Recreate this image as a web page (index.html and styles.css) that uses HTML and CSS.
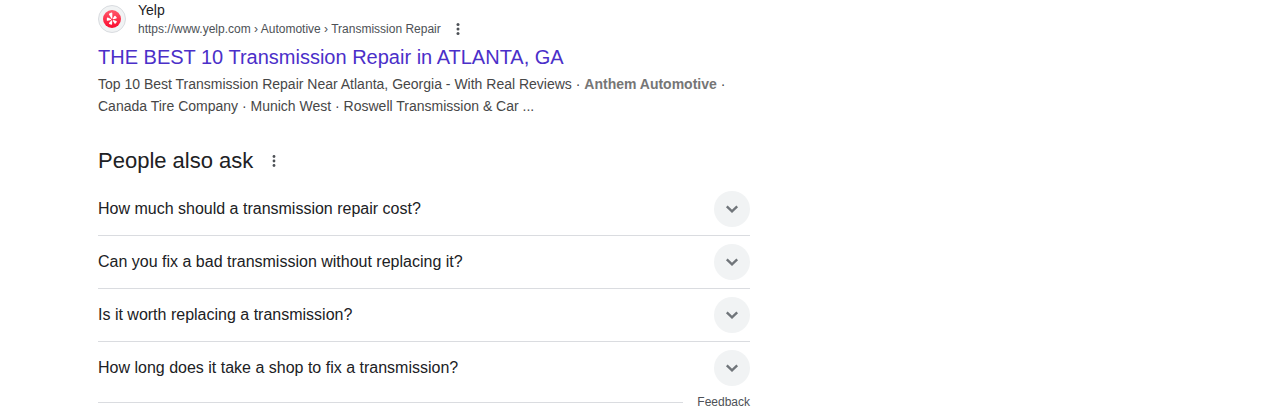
FILE: index.html
```html
<!DOCTYPE html>
<html lang="en">
<head>
<meta charset="utf-8">
<meta name="viewport" content="width=device-width, initial-scale=1.0">
<title>transmission repair - Search</title>
<link rel="stylesheet" href="styles.css">
</head>
<body>
<main class="results">

  <article class="result">
    <div class="source">
      <span class="favicon">
        <svg width="18" height="18" viewBox="0 0 18 18" aria-hidden="true">
          <defs>
            <linearGradient id="red" x1="0" y1="0" x2="0" y2="1">
              <stop offset="0" stop-color="#ff5a6c"/>
              <stop offset="1" stop-color="#fb0a2e"/>
            </linearGradient>
          </defs>
          <circle cx="9" cy="9" r="9" fill="url(#red)"/>
          <g fill="#fff">
            <path d="M9.300 8.300 V3.200 Q9.300 2.500 8.500 2.600 L6.300 3.400 Q5.600 3.800 6 4.500 L8.400 8.500 Q9.200 9.200 9.300 8.300 Z"/>
            <path d="M7.900 9 L4.900 7.500 Q4.100 7.300 3.900 8 L3.800 10.200 Q3.900 11 4.700 10.800 L7.900 10 Q8.600 9.500 7.900 9 Z"/>
            <path d="M8.300 10.500 L6 13 Q5.700 13.700 6.300 14 L8.300 14.700 Q9.100 14.800 9.100 14 L9.200 10.900 Q9 10.100 8.300 10.500 Z"/>
            <path d="M9.900 10.900 L11.500 13.500 Q12 14.100 12.600 13.500 L13.800 11.900 Q14 11.200 13.400 10.900 L10.500 10 Q9.600 10.100 9.900 10.900 Z"/>
            <path d="M10.400 9.300 L13.300 8.500 Q14 8.200 13.700 7.500 L12.500 5.900 Q11.900 5.400 11.400 6 L9.800 8.500 Q9.500 9.300 10.400 9.300 Z"/>
          </g>
        </svg>
      </span>
      <div class="site">
        <div class="site-name">Yelp</div>
        <div class="site-url">
          <cite>https://www.yelp.com › Automotive › Transmission Repair</cite>
          <button class="more" type="button" aria-label="About this result">
            <svg width="4" height="12" viewBox="0 0 4 12"><circle cx="2" cy="1.500" r="1.500"/><circle cx="2" cy="6" r="1.500"/><circle cx="2" cy="10.500" r="1.500"/></svg>
          </button>
        </div>
      </div>
    </div>
    <h3 class="title"><a href="#">THE BEST 10 Transmission Repair in ATLANTA, GA</a></h3>
    <p class="snippet">Top 10 Best Transmission Repair Near Atlanta, Georgia - With Real Reviews · <em>Anthem Automotive</em> · Canada Tire Company · Munich West · Roswell Transmission &amp; Car ...</p>
  </article>

  <section class="related">
    <div class="related-head">
      <h2>People also ask</h2>
      <button class="more" type="button" aria-label="About this section">
        <svg width="4" height="12" viewBox="0 0 4 12"><circle cx="2" cy="1.500" r="1.400"/><circle cx="2" cy="6" r="1.400"/><circle cx="2" cy="10.500" r="1.400"/></svg>
      </button>
    </div>

    <div class="questions">
      <button class="question" type="button">
        <span>How much should a transmission repair cost?</span>
        <span class="arrow"><svg width="24" height="24" viewBox="0 0 24 24"><path d="M6.800 9.300 L12 14.300 L17.200 9.300"/></svg></span>
      </button>
      <button class="question" type="button">
        <span>Can you fix a bad transmission without replacing it?</span>
        <span class="arrow"><svg width="24" height="24" viewBox="0 0 24 24"><path d="M6.800 9.300 L12 14.300 L17.200 9.300"/></svg></span>
      </button>
      <button class="question" type="button">
        <span>Is it worth replacing a transmission?</span>
        <span class="arrow"><svg width="24" height="24" viewBox="0 0 24 24"><path d="M6.800 9.300 L12 14.300 L17.200 9.300"/></svg></span>
      </button>
      <button class="question" type="button">
        <span>How long does it take a shop to fix a transmission?</span>
        <span class="arrow"><svg width="24" height="24" viewBox="0 0 24 24"><path d="M6.800 9.300 L12 14.300 L17.200 9.300"/></svg></span>
      </button>
    </div>

    <div class="related-foot">
      <a href="#">Feedback</a>
    </div>
  </section>

</main>
</body>
</html>
```

FILE: styles.css
```css
* {
  box-sizing: border-box;
}

body {
  margin: 0;
  background: #fff;
  color: #202124;
  font-family: Arial, "Liberation Sans", sans-serif;
  font-size: 14px;
}

h2, h3, p {
  margin: 0;
  font-weight: normal;
}

a {
  text-decoration: none;
}

button {
  padding: 0;
  border: none;
  background: none;
  color: inherit;
  font-family: inherit;
  cursor: pointer;
}

.results {
  max-width: 750px;
  padding-left: 98px;
}

/* search result */
.source {
  display: flex;
  align-items: center;
  gap: 12px;
}

.favicon {
  display: flex;
  align-items: center;
  justify-content: center;
  width: 28px;
  height: 28px;
  border: 1px solid #d9dce0;
  border-radius: 50%;
  background: #f1f3f4;
}

.site-name {
  line-height: 20px;
}

.site-url {
  display: flex;
  align-items: center;
  gap: 15px;
  font-size: 12px;
  line-height: 18px;
  color: #4d5156;
}

.site-url cite {
  font-style: normal;
}

.more {
  display: flex;
  fill: #4d5156;
}

.title {
  margin-top: 6px;
  font-size: 20px;
  line-height: 26px;
}

.title a {
  color: #4b2fc9;
}

.snippet {
  margin-top: 3px;
  line-height: 22px;
  color: #474747;
}

.snippet em {
  font-style: normal;
  font-weight: bold;
  color: #767676;
}

/* people also ask */
.related {
  margin-top: 30px;
}

.related-head {
  display: flex;
  align-items: center;
  gap: 19px;
}

.related-head h2 {
  font-size: 22px;
  line-height: 28px;
}

.questions {
  margin-top: 8px;
}

.question {
  display: flex;
  align-items: center;
  justify-content: space-between;
  width: 100%;
  padding: 8px 0;
  font-size: 16px;
  text-align: left;
}

.question + .question {
  border-top: 1px solid #dadce0;
}

.arrow {
  display: flex;
  align-items: center;
  justify-content: center;
  width: 36px;
  height: 36px;
  border-radius: 50%;
  background: #f1f3f4;
}

.arrow svg {
  width: 24px;
  height: 24px;
  fill: none;
  stroke: #70757a;
  stroke-width: 2.4;
}

.related-foot {
  display: flex;
  align-items: center;
  gap: 14px;
  font-size: 12px;
  line-height: 16px;
}

.related-foot::before {
  content: "";
  flex: 1;
  height: 1px;
  background: #dadce0;
}

.related-foot a {
  color: #4d5156;
}
```
